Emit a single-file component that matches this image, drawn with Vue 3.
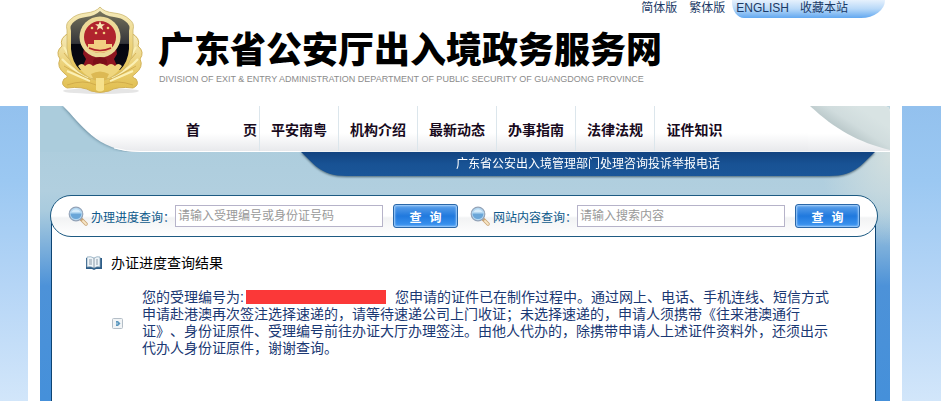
<template>
  <div class="page">
    <header class="header">
      <div class="wrap header-inner">
        <a href="#" class="brand" aria-label="广东省公安厅出入境政务服务网">
          <svg class="emblem" viewBox="0 0 88 90" width="88" height="90" aria-hidden="true">
            <defs>
              <linearGradient id="gold" x1="0" y1="0" x2="0" y2="1">
                <stop offset="0" stop-color="#f5ecc0" />
                <stop offset="0.5" stop-color="#ecd27a" />
                <stop offset="1" stop-color="#e0bd4c" />
              </linearGradient>
              <linearGradient id="shield" x1="0" y1="0" x2="0" y2="1">
                <stop offset="0" stop-color="#77745c" />
                <stop offset="0.55" stop-color="#34353a" />
                <stop offset="0.56" stop-color="#05060f" />
                <stop offset="1" stop-color="#0a0a14" />
              </linearGradient>
            </defs>
            <ellipse cx="45" cy="85" rx="38" ry="3" fill="#000" opacity="0.1" />
            <path d="M13 27 Q3 32 6 40 Q-1 46 4 53 Q0 61 9 68 Q14 71 8 73 Q4 79 11 82 Q27 80 35 85 Q44 88 53 85 Q61 80 77 82 Q84 79 80 73 Q74 71 79 68 Q88 61 84 53 Q89 46 82 40 Q85 32 75 27 Z" fill="url(#gold)" stroke="#d2b258" />
            <g fill="none" stroke="#fbf0b4" stroke-width="2">
              <path d="M8 41 Q14 54 30 66 M6 53 Q14 62 32 72 M11 65 Q20 69 34 75 M80 41 Q74 54 58 66 M82 53 Q74 62 56 72 M77 65 Q68 69 54 75" />
            </g>
            <g fill="none" stroke="#c9a243" stroke-width="0.700">
              <path d="M8 47 Q16 58 33 70 M8 60 Q18 66 35 74 M11 79 Q28 73 40 79 M80 47 Q72 58 55 70 M80 60 Q70 66 53 74 M77 79 Q60 73 48 79" />
            </g>
            <path d="M44 1 Q48 6 58 7 Q68 8 73 13 Q79 17 77 24 V42 Q76 61 60 69 L44 76 L28 69 Q12 61 11 42 V24 Q9 17 15 13 Q20 8 30 7 Q40 6 44 1 Z" fill="url(#gold)" stroke="#cdb76e" stroke-width="0.800" />
            <path d="M44 5 Q49 10 58 11 Q66 12 69 15 Q75 19 73 25 V43 Q72 56 64 64 H24 Q16 56 15 43 V25 Q13 19 19 15 Q22 12 30 11 Q39 10 44 5 Z" fill="url(#shield)" />
            <path d="M28 42 H60 L61 48 L58 53 L61 60 H27 L30 53 L27 48 Z" fill="#8e1520" />
            <circle cx="44" cy="31" r="20.500" fill="#ecd998" />
            <circle cx="44" cy="31" r="16" fill="#b0232d" />
            <path d="M44 15 l1.300 3.300 h3.600 l-2.800 2.200 1.100 3.500 -3.200 -2.100 -3.200 2.100 1.100 -3.500 -2.800 -2.200 h3.600 Z" fill="#f9e8b4" />
            <g fill="#f2cf82">
              <circle cx="36" cy="22" r="1.300" />
              <circle cx="52" cy="22" r="1.300" />
              <circle cx="40" cy="27" r="1.300" />
              <circle cx="48" cy="27" r="1.300" />
              <path d="M38 34 h12 v4 h6 v5 q-5 4 -12 4 t-12 -4 v-5 h6 Z" />
            </g>
            <path d="M33 42 Q44 47 55 42" fill="none" stroke="#b0232d" stroke-width="1.500" />
            <path d="M37 58 Q36 51 44 51 Q52 51 51 58 Z" fill="#7c0f18" />
            <path d="M22 60 Q26 56 29 60 Q33 56 37 60 Q44 55 51 60 Q55 56 59 60 Q62 56 66 60 Q61 68 53 72 H35 Q27 68 22 60 Z" fill="#efd67e" />
            <path d="M35 68 Q44 63 53 68 L50 74 H38 Z" fill="#dcb954" />
            <path d="M40 72 H48 V84 Q44 87 40 84 Z" fill="#f6e18c" />
          </svg>
          <span class="brand-text">
            <strong>广东省公安厅出入境政务服务网</strong>
            <span class="brand-en">DIVISION OF EXIT &amp; ENTRY ADMINISTRATION DEPARTMENT OF PUBLIC SECURITY OF GUANGDONG PROVINCE</span>
          </span>
        </a>
        <div class="top-links">
          <a href="#">简体版</a>
          <a href="#">繁体版</a>
          <span class="top-tab">
            <a href="#">ENGLISH</a>
            <a href="#">收藏本站</a>
          </span>
        </div>
      </div>
    </header>

    <div class="frame">
      <div class="panel">
        <nav class="nav">
          <svg class="nav-left" viewBox="0 0 100 46" width="100" height="46" aria-hidden="true">
            <defs>
              <linearGradient id="nav-fill" gradientUnits="userSpaceOnUse" x1="0" y1="0" x2="0" y2="46">
                <stop offset="0" stop-color="#fff" />
                <stop offset="0.6" stop-color="#fff" />
                <stop offset="1" stop-color="#e8e9ec" />
              </linearGradient>
              <filter id="soft" x="-20%" y="-20%" width="140%" height="140%">
                <feGaussianBlur stdDeviation="1.5" />
              </filter>
            </defs>
            <path d="M22 0 C39 17 55 46 100 46 V0 Z" fill="#4f7488" opacity="0.7" filter="url(#soft)" />
            <path d="M23 0 C40 16 56 46 100 46 V0 Z" fill="url(#nav-fill)" />
            <path d="M74 42 Q86 45.500 100 45.500" fill="none" stroke="#fff" />
          </svg>
          <ul class="nav-list">
            <li v-for="item in menu" :key="item.join('')">
              <a href="#" :class="{ spread: item.length > 1 }">
                <span v-for="part in item" :key="part">{{ part }}</span>
              </a>
            </li>
          </ul>
          <svg class="nav-right" viewBox="0 0 82 46" width="82" height="46" aria-hidden="true">
            <defs>
              <linearGradient id="fold" gradientUnits="userSpaceOnUse" x1="34" y1="30" x2="52" y2="2">
                <stop offset="0" stop-color="#b3c2c4" />
                <stop offset="0.5" stop-color="#d0dcdd" />
                <stop offset="1" stop-color="#d8e3e3" />
              </linearGradient>
            </defs>
            <path d="M0 0 H76 Q82 0 82 6 V46 H0 Z" fill="url(#nav-fill)" />
            <path d="M2 0 H76 Q82 0 82 6 V44 C50 36 28 24 2 0 Z" fill="url(#fold)" />
            <path d="M0 45.500 H82" stroke="#fff" />
          </svg>
        </nav>

        <div class="notice">
          <svg viewBox="0 0 46 24" width="46" height="24" aria-hidden="true">
            <defs>
              <linearGradient id="notice-fill" gradientUnits="userSpaceOnUse" x1="0" y1="0" x2="0" y2="24">
                <stop offset="0" stop-color="#124380" />
                <stop offset="0.5" stop-color="#185294" />
                <stop offset="1" stop-color="#1a5698" />
              </linearGradient>
            </defs>
            <path d="M0 0 C12 10 18 24 46 24 V0 Z" fill="url(#notice-fill)" />
          </svg>
          <a href="#">广东省公安出入境管理部门处理咨询投诉举报电话</a>
          <svg viewBox="0 0 46 24" width="46" height="24" aria-hidden="true">
            <path d="M46 0 C34 10 28 24 0 24 V0 Z" fill="url(#notice-fill)" />
          </svg>
        </div>

        <div class="search-bar">
          <form v-for="s in searches" :key="s.id" class="search" @submit.prevent>
            <svg class="lens" viewBox="0 0 20 20" width="20" height="20" aria-hidden="true">
              <path d="M13 13 L18 18" stroke="#c9a679" stroke-width="3.500" stroke-linecap="round" />
              <path d="M15 15 L18 18" stroke="#f8e6c4" stroke-width="1.800" stroke-linecap="round" />
              <circle cx="8" cy="8" r="6.800" fill="#b4d8f2" stroke="#93a3b8" stroke-width="1.200" />
              <path d="M2.500 7.500 H13.500 A5.500 5.500 0 0 1 2.500 7.500 Z" fill="#6aa6d8" />
              <path d="M3.500 6 A5 5 0 0 1 12.500 6 Z" fill="#d6ecfb" />
            </svg>
            <label :for="s.id">{{ s.label }}</label>
            <input :id="s.id" v-model="s.value" type="text" :placeholder="s.placeholder" />
            <button type="submit"><span>查</span><span>询</span></button>
          </form>
        </div>

        <main class="content">
          <h2>
            <svg viewBox="0 0 16 14" width="16" height="14" aria-hidden="true">
              <path d="M0 2 H16 V13 H10 L8 14 L6 13 H0 Z" fill="#2e5d87" />
              <path d="M1 1 Q5 0 8 2 Q11 0 14 1 V11 Q11 10 8 12 Q5 10 1 11 Z" fill="#eef4f8" stroke="#7e9db5" stroke-width="0.700" />
              <path d="M8 2 V12 M3 4 H6 M3 6 H6 M3 8 H6 M10 4 H12 M10 6 H12 M10 8 H12" stroke="#8b9aa8" />
            </svg>
            办证进度查询结果
          </h2>
          <div class="result">
            <svg viewBox="0 0 11 11" width="11" height="11" aria-hidden="true">
              <rect x="0.500" y="0.500" width="10" height="10" rx="1" fill="#f1f4f6" stroke="#b4bec7" />
              <path d="M4 3 H6 L8.500 5.500 L6 8 H4 Z" fill="#5a96bd" />
              <path d="M5 4.500 V6.500" stroke="#d5e6f0" />
            </svg>
            <p>
              您的受理编号为:<span class="masked"></span>您申请的证件已在制作过程中。通过网上、电话、手机连线、短信方式<br />
              申请赴港澳再次签注选择速递的，请等待速递公司上门收证；未选择速递的，申请人须携带《往来港澳通行<br />
              证》、身份证原件、受理编号前往办证大厅办理签注。由他人代办的，除携带申请人上述证件资料外，还须出示<br />
              代办人身份证原件，谢谢查询。
            </p>
          </div>
        </main>
      </div>
    </div>
  </div>
</template>

<script setup>
import { ref } from 'vue'

const menu = [
  ['首', '页'],
  ['平安南粤'],
  ['机构介绍'],
  ['最新动态'],
  ['办事指南'],
  ['法律法规'],
  ['证件知识'],
]

const searches = ref([
  { id: 'progress', label: '办理进度查询：', placeholder: '请输入受理编号或身份证号码', value: '' },
  { id: 'site', label: '网站内容查询：', placeholder: '请输入搜索内容', value: '' },
])
</script>

<style>
body {
  background: #fff;
}
</style>

<style scoped>
.page {
  display: flex;
  flex-direction: column;
  min-height: 100vh;
  font-family: 'Liberation Sans', 'Noto Sans CJK SC', sans-serif;
  font-size: 12px;
  text-spacing-trim: space-all;
  background: linear-gradient(#93c1ee 107px, #9bc8f2 180px, #b5d5f6 285px, #d2e6fa 401px);
}

a {
  color: inherit;
  text-decoration: none;
}

svg {
  display: block;
  flex: none;
}

.header {
  padding-right: 11px;
  background: #fff;
}

.wrap {
  max-width: 850px;
  margin: 0 auto;
}

.header-inner {
  display: grid;
  min-height: 106px;
}

.brand,
.top-links {
  grid-area: 1 / 1;
}

.brand {
  display: flex;
  align-items: flex-start;
  gap: 14px;
  padding: 6px 0 0 16px;
}

.brand-text {
  display: flex;
  flex-direction: column;
  padding-top: 25px;
  white-space: nowrap;
}

.brand-text strong {
  font-size: 36px;
  font-weight: 900;
  line-height: 40px;
  color: #000;
}

.brand-en {
  padding-left: 1px;
  font-size: 9px;
  line-height: 16px;
  color: #8c8c8c;
}

.top-links {
  display: flex;
  align-self: start;
  justify-self: end;
  gap: 12px;
  padding-right: 5px;
  line-height: 17px;
  color: #1b3a66;
}

.top-tab {
  display: flex;
  gap: 11px;
  margin-left: -5px;
  padding: 0 37px 1px 4px;
  border-radius: 0 0 24px 12px / 0 0 18px 16px;
  background: linear-gradient(#e6f1fd, #b7d8f8 50%, #62a8f0);
}

.frame {
  display: flex;
  flex: 1;
  width: 100%;
  max-width: 885px;
  box-sizing: border-box;
  margin: 0 auto;
  padding-right: 11px;
}

.panel {
  display: flex;
  flex: 1;
  flex-direction: column;
  border: solid #fff;
  border-width: 0 12px;
  background:
    radial-gradient(70px 90px at 100% 50px, #d3dfdf, transparent),
    linear-gradient(#a9cbdb, #b1cfdf 85px, #a9cbde 105px, #4d92d8 180px, #4590da);
}

.nav {
  display: flex;
}

.nav-left {
  background: #abccdc;
  border-radius: 6px 0 0 0;
}

.panel,
.nav {
  border-radius: 6px 6px 0 0;
}

.panel {
  background-clip: padding-box;
}

.frame {
  background: linear-gradient(#fff, #fff) no-repeat left / 874px 100%;
}

.nav-list {
  display: grid;
  flex: 1;
  grid-template-columns: repeat(7, 79px);
  margin: 0;
  padding: 0 0 0 41px;
  list-style: none;
  background: linear-gradient(#fff 60%, #e8e9ec);
  border-bottom: 1px solid #fff;
}

.nav-list li {
  display: grid;
  align-items: center;
  border-right: 1px solid #dce6ec;
}

.nav-list li:last-child {
  border-right: 0;
}

.nav-list a {
  display: flex;
  justify-content: center;
  font-size: 14px;
  font-weight: 700;
  color: #180a1c;
}

.nav-list .spread {
  justify-content: space-between;
  padding: 0 2px 0 5px;
}

.notice {
  display: flex;
  width: 574px;
  max-width: 100%;
  margin: 0 15px 19px auto;
  line-height: 24px;
  color: #fff;
  filter: drop-shadow(0 1px 1px #4b6675);
}

.notice a {
  flex: 1;
  text-align: center;
  background: linear-gradient(#124380, #185294 50%, #1a5698);
}

.search-bar {
  position: relative;
  z-index: 1;
  display: flex;
  gap: 12px;
  margin: 0 12px 0 10px;
  padding: 8px 17px;
  border: 1px solid #1d5a82;
  border-radius: 22px;
  background: linear-gradient(#fff, #fff 50%, #f2f3f4 55%, #fff);
}

.search {
  display: flex;
  flex: 1;
  align-items: center;
}

.lens {
  margin-right: 3px;
}

.search label {
  color: #0e5a8c;
  white-space: nowrap;
}

.search input {
  flex: 1;
  min-width: 0;
  height: 22px;
  box-sizing: border-box;
  margin-right: 10px;
  padding: 0 2px;
  border: 1px solid #b6b3c9;
  background: #fff;
  font: inherit;
  color: #333;
}

.search input::placeholder {
  color: #999;
}

.search button {
  display: flex;
  align-items: center;
  justify-content: center;
  gap: 8px;
  width: 65px;
  height: 24px;
  padding: 0;
  border: 1px solid #2a67a8;
  border-radius: 3px;
  background: linear-gradient(#5fa2ea, #2079de 50%, #3f97f2);
  box-shadow: inset 0 0 2px 1px #a9d2fb;
  font: inherit;
  font-weight: 700;
  color: #fff;
}

.content {
  flex: 1;
  margin: -22px 14px 0 11px;
  padding: 39px 34px 40px;
  border: solid #0d4473;
  border-width: 0 1px;
  background: #fff;
}

h2 {
  display: flex;
  align-items: center;
  gap: 9px;
  margin: 0;
  font-size: 14px;
  font-weight: 400;
  line-height: 18px;
  color: #000;
}

.result {
  display: flex;
  align-items: center;
  gap: 19px;
  margin-top: 17px;
  padding-left: 26px;
}

.result p {
  margin: 0;
  font-size: 14px;
  line-height: 17px;
  white-space: nowrap;
  color: #1a3873;
}

.masked {
  display: inline-block;
  width: 140px;
  height: 14px;
  margin: 0 9px 0 2px;
  vertical-align: -2px;
  background: #fb3838;
}
</style>
